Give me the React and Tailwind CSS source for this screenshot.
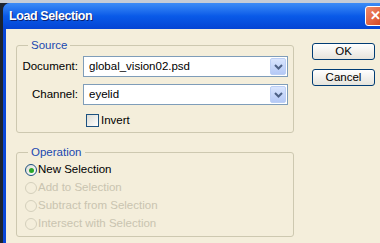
import React from 'react';

const font = { fontFamily: '"Liberation Sans", Arial, sans-serif' };

const Chevron = () => (
  <svg width="9" height="6" viewBox="0 0 9 6">
    <polyline points="1,1 4.5,4.5 8,1" fill="none" stroke="#4d6185" strokeWidth="2" />
  </svg>
);

const Combo = ({ value }) => (
  <div className="flex h-[21px] w-[205px] items-stretch border border-[#7f9db9] bg-white p-[1px]">
    <span className="flex flex-1 items-center pl-[4px] text-[11.5px] text-black">{value}</span>
    <span className="flex w-[16px] items-center justify-center rounded-[2px] border border-[#bccff5] bg-gradient-to-b from-[#d9e5fd] to-[#b5c9f6]">
      <Chevron />
    </span>
  </div>
);

const Radio = ({ label, checked, disabled }) => (
  <div className="flex h-[18px] items-center gap-[1px]">
    <span
      className={`flex h-[12px] w-[12px] items-center justify-center rounded-full border ${
        disabled ? 'border-[#d4d0bc] bg-[#f4eedb]' : 'border-[#1c5180] bg-gradient-to-br from-[#dcdcd5] to-white'
      }`}
    >
      {checked && <span className="h-[5px] w-[5px] rounded-full bg-[#2aa52a]" />}
    </span>
    <span className={`text-[11.5px] ${disabled ? 'text-[#c9c4b0]' : 'text-black'}`}>{label}</span>
  </div>
);

const XpButton = ({ children }) => (
  <button className="flex h-[17px] w-[63px] items-center justify-center rounded-[3px] border border-[#003c74] bg-gradient-to-b from-white to-[#e6e4dc] text-[11.5px] text-black">
    {children}
  </button>
);

export default function App() {
  return (
    <div className="h-[243px] w-[380px] overflow-hidden bg-[#c7cdd6] pt-[3px]" style={font}>
      <div className="flex h-[260px] bg-[#1c2430] pl-[3px]">
        <div className="flex w-[400px] shrink-0 flex-col rounded-t-[7px] bg-[#0846d8] px-[4px]">
          <div className="-mx-[4px] flex h-[26px] items-center justify-between rounded-t-[7px] bg-gradient-to-b from-[#3d8cf6] via-[#0a5ae8] to-[#0544d4] pl-[6px] pr-[17px]">
            <span className="text-[12.5px] font-bold tracking-[-0.4px] text-white [text-shadow:1px_1px_0_#0a1e6e]">
              Load Selection
            </span>
            <span className="flex h-[20px] w-[21px] items-center justify-center rounded-[3px] border border-white bg-gradient-to-br from-[#f08b6b] to-[#d23c12] text-[13px] font-bold text-white">
              ✕
            </span>
          </div>

          <div className="-ml-[1px] flex flex-1 bg-[#f4eedb] pl-[10px]">
            <div className="flex w-[278px] flex-col">
              <fieldset className="mt-[9px] h-[95px] rounded-[3px] border border-[#cdc8b0]">
                <legend className="ml-[11px] px-[3px] text-[11.5px] leading-[14px] text-[#2048b0]">Source</legend>
                <div className="mt-[4px] flex flex-col gap-[7px]">
                  <div className="flex items-center gap-[5px]">
                    <span className="w-[61px] text-right text-[11.5px] text-black">Document:</span>
                    <Combo value="global_vision02.psd" />
                  </div>
                  <div className="flex items-center gap-[5px]">
                    <span className="w-[61px] text-right text-[11.5px] text-black">Channel:</span>
                    <Combo value="eyelid" />
                  </div>
                  <div className="flex items-center gap-[2px] pl-[69px]">
                    <span className="h-[13px] w-[13px] border border-[#1c5180] bg-gradient-to-br from-[#dcdcd5] to-white" />
                    <span className="text-[11.5px] text-black">Invert</span>
                  </div>
                </div>
              </fieldset>

              <fieldset className="mt-[12px] h-[92px] rounded-[3px] border border-[#cdc8b0]">
                <legend className="ml-[11px] px-[3px] text-[11.5px] leading-[14px] text-[#2048b0]">Operation</legend>
                <div className="mt-[2px] flex flex-col pl-[8px]">
                  <Radio label="New Selection" checked />
                  <Radio label="Add to Selection" disabled />
                  <Radio label="Subtract from Selection" disabled />
                  <Radio label="Intersect with Selection" disabled />
                </div>
              </fieldset>
            </div>

            <div className="ml-[18px] mt-[14px] flex flex-col gap-[9px]">
              <XpButton>OK</XpButton>
              <XpButton>Cancel</XpButton>
            </div>
          </div>
        </div>
      </div>
    </div>
  );
}
